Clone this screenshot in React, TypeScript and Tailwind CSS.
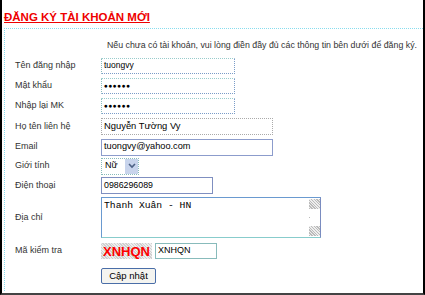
import React from 'react';

const font = { fontFamily: '"Liberation Sans", Arial, sans-serif' };

function Row({ label, children, h = 'h-[20px]' }: { label: string; children: React.ReactNode; h?: string }) {
  return (
    <div className={`flex items-center ${h}`}>
      <div className="w-[96px] pl-[10px] text-[9px] text-[#333]">{label}</div>
      <div className="flex items-center">{children}</div>
    </div>
  );
}

const boxCls =
  'flex h-[16px] items-center border border-dotted border-t-[#9cc] border-l-[#8bb] border-r-[#7a9cc8] border-b-[#7a9cc8] bg-white px-[2px] text-black';

const dots = (
  <span className="text-[6.5px] tracking-[0.5px] leading-none">●●●●●●</span>
);

export default function App() {
  return (
    <div
      className="w-[425px] h-[295px] bg-white border-l-2 border-l-black border-r-2 border-r-black border-r-dotted border-b-2 border-b-[#444] border-b-dotted"
      style={font}
    >
      <div className="pl-[2px] pt-[4px] h-[28px]">
        <span className="text-[11.5px] font-bold text-[#e00] underline leading-[16px]">
          ĐĂNG KÝ TÀI KHOẢN MỚI
        </span>
      </div>
      <div className="ml-[2px] border-t border-l border-dotted border-[#8de] h-[263px]">
        <div className="pt-[10px] pr-[6px] text-right text-[8.8px] text-[#333] h-[26px]">
          Nếu chưa có tài khoản, vui lòng điền đầy đủ các thông tin bên dưới để đăng ký.
        </div>
        <Row label="Tên đăng nhập" h="h-[21px]">
          <div className={`${boxCls} w-[134px] text-[8.5px]`}>tuongvy</div>
        </Row>
        <Row label="Mật khẩu" h="h-[20px]">
          <div className={`${boxCls} w-[134px]`}>{dots}</div>
        </Row>
        <Row label="Nhập lại MK" h="h-[20px]">
          <div className={`${boxCls} w-[134px]`}>{dots}</div>
        </Row>
        <Row label="Họ tên liên hệ" h="h-[21px]">
          <div className="flex h-[17px] w-[172px] items-center border border-dotted border-[#aaa] bg-white px-[2px] text-[9.4px] text-black">
            Nguyễn Tường Vy
          </div>
        </Row>
        <Row label="Email" h="h-[20px]">
          <div className="flex h-[17px] w-[172px] items-center border border-[#8c9ccc] bg-white px-[2px] text-[9.2px] text-black">
            tuongvy@yahoo.com
          </div>
        </Row>
        <Row label="Giới tính" h="h-[18px]">
          <div className="flex h-[17px] w-[38px] items-center border border-dotted border-[#8bb] bg-white">
            <span className="flex-1 pl-[3px] text-[9px] text-black">Nữ</span>
            <span className="flex h-[15px] w-[13px] items-center justify-center bg-[#c8d4ec]">
              <svg width="8" height="6" viewBox="0 0 8 6">
                <path d="M1 1 L4 4 L7 1" fill="none" stroke="#4d6185" strokeWidth="1.6" />
              </svg>
            </span>
          </div>
        </Row>
        <Row label="Điện thoại" h="h-[21px]">
          <div className="flex h-[17px] w-[112px] items-center border border-[#7f8fc0] bg-white px-[2px] text-[8.8px] text-black">
            0986296089
          </div>
        </Row>
        <Row label="Địa chỉ" h="h-[43px]">
          <div className="flex h-[41px] w-[220px] border border-t-[#6a9ad0] border-l-[#6a9ad0] border-r-[#7a8cc0] border-b-[#8cc] bg-white">
            <div
              className="flex-1 pl-[2px] pt-[2px] text-[9.7px] text-black leading-[12px]"
              style={{ fontFamily: '"Liberation Mono", "Courier New", monospace' }}
            >
              Thanh Xuân - HN
            </div>
            <div className="flex w-[11px] flex-col justify-between py-[1px]">
              <div className="h-[10px] bg-[repeating-linear-gradient(45deg,#bbb_0px,#bbb_1px,#eee_1px,#eee_2px)]" />
              <div className="h-[1px] w-[1px] bg-[#bbb]" />
              <div className="h-[10px] bg-[repeating-linear-gradient(45deg,#bbb_0px,#bbb_1px,#eee_1px,#eee_2px)]" />
            </div>
          </div>
        </Row>
        <Row label="Mã kiểm tra" h="h-[24px]">
          <div className="flex h-[16px] w-[51px] items-center justify-center bg-[repeating-linear-gradient(45deg,#d0d0d0_0px,#d0d0d0_1px,#eee_1px,#eee_2px)]">
            <span className="text-[13px] font-bold text-[#f00] leading-none">XNHQN</span>
          </div>
          <div className="ml-[3px] flex h-[16px] w-[62px] items-center border border-[#8bb] bg-white px-[2px] text-[9px] text-black">
            XNHQN
          </div>
        </Row>
        <Row label="" h="h-[26px]">
          <button className="h-[16px] w-[55px] rounded-[2px] border border-[#4a6ea8] bg-[#f4f4f0] text-[9.5px] text-black leading-none">
            Cập nhật
          </button>
        </Row>
      </div>
    </div>
  );
}
